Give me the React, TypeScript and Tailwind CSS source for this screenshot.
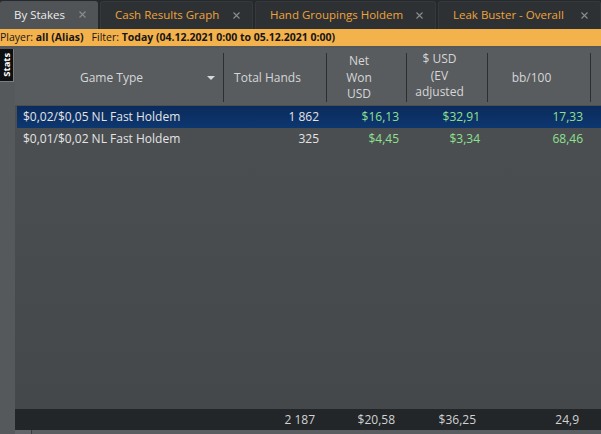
import React from 'react';

const TABS = [
  { label: 'By Stakes', w: 'w-[98px]', active: true },
  { label: 'Cash Results Graph', w: 'w-[153px]', active: false },
  { label: 'Hand Groupings Holdem', w: 'w-[181px]', active: false },
  { label: 'Leak Buster - Overall', w: 'flex-1', active: false },
];

const ROWS = [
  { game: '$0,02/$0,05 NL Fast Holdem', hands: '1 862', net: '$16,13', ev: '$32,91', bb: '17,33', selected: true },
  { game: '$0,01/$0,02 NL Fast Holdem', hands: '325', net: '$4,45', ev: '$3,34', bb: '68,46', selected: false },
];

const COLS = 'grid grid-cols-[209px_103px_80px_81px_103px_1fr]';

function HeaderCell({ children, last }: { children?: React.ReactNode; last?: boolean }) {
  return (
    <div className="relative flex items-center justify-center pt-[3px] pr-[16px] text-center leading-[16.5px]">
      {children}
      {!last && <div className="absolute right-0 top-[5px] bottom-[3px] w-px bg-[#2c2f32]" />}
    </div>
  );
}

export default function App() {
  return (
    <div className="w-[601px] h-[434px] overflow-hidden flex flex-col bg-[#26292c] font-['Open_Sans',sans-serif] text-[12px]">
      {/* Tabs */}
      <div className="h-[29px] flex items-stretch gap-[2px] pt-[1px]">
        {TABS.map(t => (
          <div
            key={t.label}
            className={`${t.w} flex items-center justify-between pl-[14px] pr-[12px] pb-px rounded-t-[3px] text-[11.5px] ${
              t.active
                ? 'bg-[#505457] text-[#ececec]'
                : 'bg-[#2e3134] border border-b-0 border-[#36393c] text-[#f0a33a]'
            }`}
          >
            <span>{t.label}</span>
            <svg width="7" height="7" viewBox="0 0 7 7">
              <path d="M0.5 0.5l6 6M6.5 0.5l-6 6" stroke="#8a8d90" strokeWidth="1.1" />
            </svg>
          </div>
        ))}
      </div>

      {/* Filter bar */}
      <div className="h-[17px] bg-[#f4b24d] text-[#161616] text-[10.5px] flex items-center whitespace-nowrap">
        <span>Player: <b>all (Alias)</b></span>
        <span className="ml-[8px]">Filter: <b>Today (04.12.2021 0:00 to 05.12.2021 0:00)</b></span>
      </div>

      <div className="flex-1 flex bg-[#55595c] pt-[2px] min-h-0">
        {/* Side strip */}
        <div className="w-[15px] pt-[1px]">
          <div className="w-[14px] h-[33px] bg-[#0e0f10] border-r border-b border-[#7a7d80] flex items-center justify-center">
            <span className="-rotate-90 text-white font-bold text-[9.5px] leading-none">Stats</span>
          </div>
        </div>

        {/* Grid */}
        <div className="flex-1 flex flex-col min-w-0">
          <div className={`${COLS} h-[57px] bg-[#585c5f] text-[#d6d6d6]`}>
            <HeaderCell>
              <span>Game Type</span>
              <svg className="absolute right-[9px] top-[28px]" width="8" height="4" viewBox="0 0 8 4">
                <path d="M0 0h8L4 4z" fill="#d8d8d8" />
              </svg>
            </HeaderCell>
            <HeaderCell>Total Hands</HeaderCell>
            <HeaderCell>
              <span>Net<br />Won<br />USD</span>
            </HeaderCell>
            <HeaderCell>
              <span className="-mt-[4px]">$ USD<br />(EV<br />adjusted</span>
            </HeaderCell>
            <HeaderCell>bb/100</HeaderCell>
            <HeaderCell last />
          </div>

          <div className="flex-1 flex flex-col bg-gradient-to-b from-[#4b4f52] to-[#45484b] pl-[2px] pt-px">
            {ROWS.map(r => (
              <div
                key={r.game}
                className={`${COLS} h-[22px] items-center text-[12px] ${
                  r.selected ? 'bg-gradient-to-b from-[#0b2b5c] to-[#0d3770]' : ''
                }`}
              >
                <div className="pl-[6px] text-[#e4e4e4] whitespace-nowrap">{r.game}</div>
                <div className="text-right pr-[10px] text-[#e4e4e4]">{r.hands}</div>
                <div className="text-right pr-[10px] text-[#8fe08f]">{r.net}</div>
                <div className="text-right pr-[10px] text-[#8fe08f]">{r.ev}</div>
                <div className="text-right pr-[10px] text-[#8fe08f]">{r.bb}</div>
                <div />
              </div>
            ))}
          </div>

          {/* Totals */}
          <div className={`${COLS} h-[21px] items-center bg-[#222629] text-[#d2d2d2]`}>
            <div />
            <div className="text-right pr-[12px]">2 187</div>
            <div className="text-right pr-[12px]">$20,58</div>
            <div className="text-right pr-[12px]">$36,25</div>
            <div className="text-right pr-[12px]">24,9</div>
            <div />
          </div>

          {/* Scrollbar stub */}
          <div className="h-[4px] flex bg-[#5a5e61]">
            <div className="w-[16px] bg-[#62666a]" />
            <div className="w-px bg-[#3a3d40]" />
          </div>
        </div>
      </div>
    </div>
  );
}
